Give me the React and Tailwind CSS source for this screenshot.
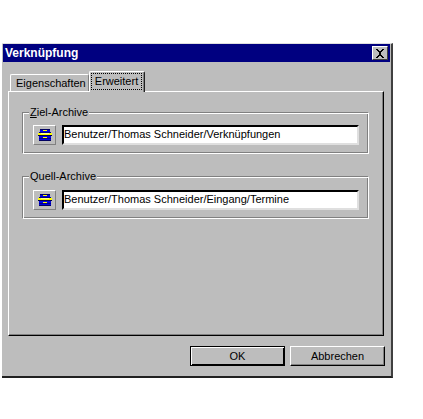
const font = { fontFamily: '"Liberation Sans", Arial, sans-serif' };

function ArchiveIcon() {
  return (
    <svg width="14" height="12" viewBox="0 0 14 12" shapeRendering="crispEdges">
      <rect x="2" y="0" width="10" height="1" fill="#000060" />
      <rect x="2" y="1" width="10" height="2" fill="#0000e0" />
      <rect x="5" y="1" width="4" height="1" fill="#ffff00" />
      <rect x="1" y="3" width="12" height="1" fill="#000080" />
      <rect x="0" y="4" width="14" height="2" fill="#ffff00" />
      <rect x="3" y="4" width="8" height="1" fill="#ffffa0" />
      <rect x="0" y="6" width="14" height="1" fill="#000040" />
      <rect x="1" y="7" width="12" height="4" fill="#0000e0" />
      <rect x="1" y="9" width="12" height="1" fill="#000080" />
      <rect x="5" y="8" width="4" height="1" fill="#ffff00" />
      <rect x="1" y="11" width="12" height="1" fill="#000060" />
    </svg>
  );
}

function ArchiveGroup({ label, path, className }) {
  return (
    <div className={`relative border border-t-[#808080] border-l-[#808080] border-r-white border-b-white pl-[10px] pr-[9px] shadow-[inset_1px_1px_0_#fff,inset_-1px_-1px_0_#808080] ${className}`}>
      <span className="absolute left-[6px] top-[-8px] bg-[#bdbdbd] px-[1px] text-[11px] leading-[14px] text-black">
        {label}
      </span>
      <div className="flex items-start gap-[6px]">
        <button className="flex h-[20px] w-[23px] items-center justify-center border border-t-white border-l-white border-r-[#808080] border-b-[#808080] bg-[#bdbdbd]">
          <ArchiveIcon />
        </button>
        <div className="h-[20px] flex-1 border-2 border-t-black border-l-black border-r-[#dfdfdf] border-b-[#dfdfdf] bg-white text-[11px] leading-[15px] text-black">
          {path}
        </div>
      </div>
    </div>
  );
}

export default function App() {
  return (
    <main className="h-[419px] w-[423px] bg-white pt-[43px] pl-[2px]" style={font}>
      <section className="h-[335px] w-[391px] border-t border-t-[#dfdfdf] border-r-2 border-r-[#404040] border-b-2 border-b-[#202020] bg-[#bdbdbd]">
        <header className="mx-[1px] flex h-[18px] items-center justify-between bg-[#000080] pl-[2px] pr-[2px]">
          <h1 className="text-[12px] font-bold leading-[18px] text-white">Verknüpfung</h1>
          <button className="flex h-[14px] w-[16px] items-center justify-center border border-t-white border-l-white border-r-[#404040] border-b-[#404040] bg-[#bdbdbd]">
            <svg width="10" height="9" viewBox="0 0 10 9" shapeRendering="crispEdges">
              <path d="M1 0h2v1h1v1h2V1h1V0h2v1H8v1H7v1H6v3h1v1h1v1h1v1H7V8H6V7H4v1H3v1H1V8h1V7h1V6h1V3H3V2H2V1H1z" fill="#000" />
            </svg>
          </button>
        </header>

        <div className="pl-[6px] pt-[9px]">
          <div className="ml-[2px] flex h-[20px] items-end">
            <div className="h-[17px] w-[79px] rounded-t-[2px] border-t border-l border-t-white border-l-white border-r border-r-[#808080] pl-[5px] text-[11px] leading-[16px] text-black">
              Eigenschaften
            </div>
            <div className="relative z-10 mb-[-1px] h-[21px] w-[56px] rounded-t-[2px] border-t border-l border-t-white border-l-white border-r border-r-[#202020] bg-[#bdbdbd] pt-[1px] pl-[1px] shadow-[inset_-1px_0_0_#808080]">
              <div className="h-[17px] w-[51px] border border-dotted border-black text-center text-[11px] leading-[14px] text-black">
                Erweitert
              </div>
            </div>
          </div>

          <div className="h-[245px] w-[376px] border border-t-white border-l-white border-r-black border-b-black pl-[13px] pr-[14px] pt-[20px] shadow-[inset_-1px_-1px_0_#808080]">
            <ArchiveGroup
              label={<><u>Z</u>iel-Archive</>}
              path="Benutzer/Thomas Schneider/Verknüpfungen"
              className="h-[42px] pt-[12px]"
            />
            <ArchiveGroup
              label="Quell-Archive"
              path="Benutzer/Thomas Schneider/Eingang/Termine"
              className="mt-[22px] h-[43px] pt-[13px]"
            />
          </div>
        </div>

        <footer className="mt-[10px] flex justify-end gap-[5px] pr-[6px]">
          <button className="h-[20px] w-[95px] border border-black bg-[#bdbdbd] text-[11px] leading-[16px] text-black shadow-[inset_1px_1px_0_#fff,inset_-1px_-1px_0_#000]">
            OK
          </button>
          <button className="h-[20px] w-[95px] border border-t-white border-l-white border-r-black border-b-black bg-[#bdbdbd] text-[11px] leading-[16px] text-black shadow-[inset_-1px_-1px_0_#808080]">
            Abbrechen
          </button>
        </footer>
      </section>
    </main>
  );
}
